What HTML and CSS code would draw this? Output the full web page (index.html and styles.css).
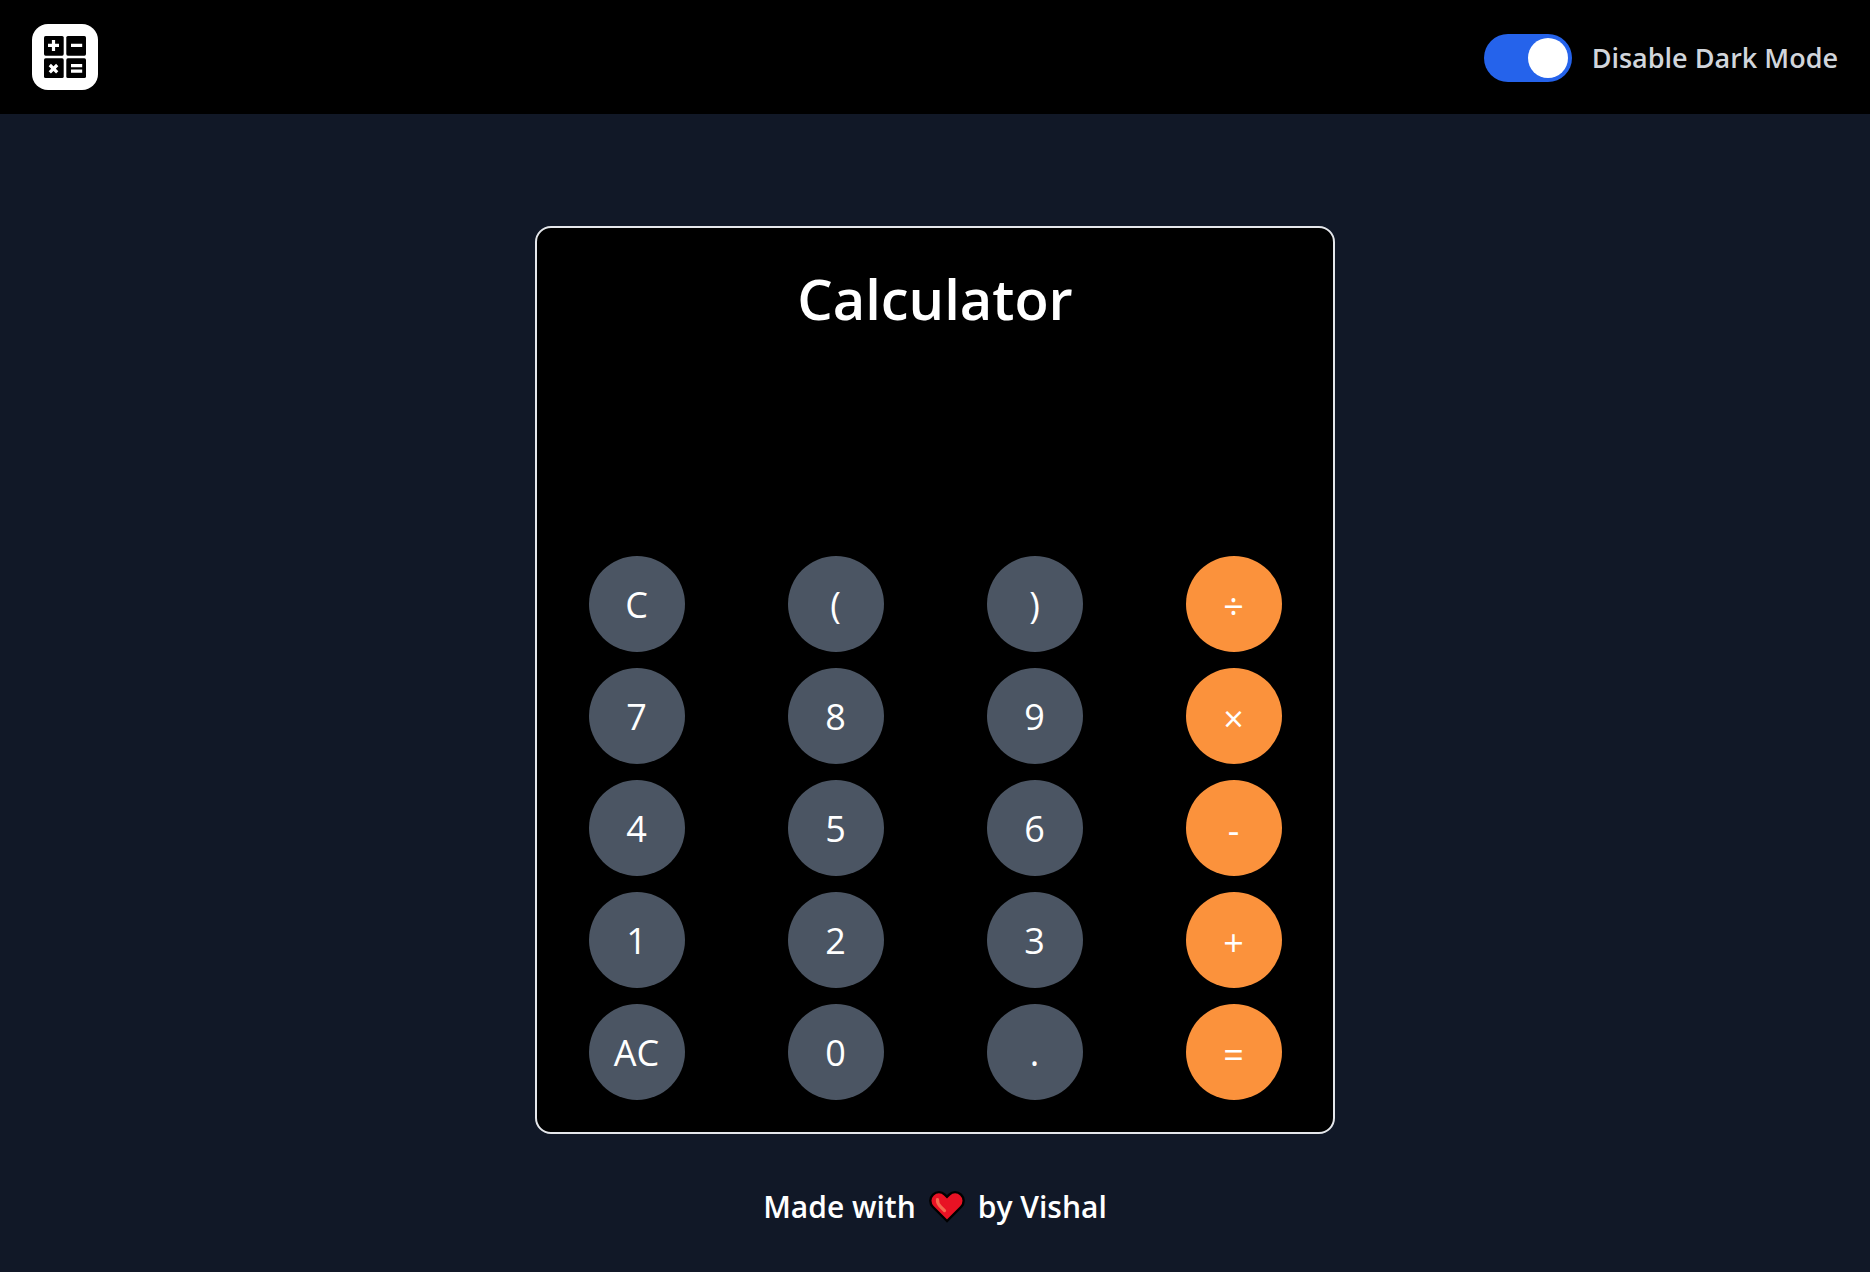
FILE: index.html
```html
<!DOCTYPE html>
<html lang="en">
<head>
<meta charset="utf-8">
<meta name="viewport" content="width=device-width, initial-scale=1">
<title>Calculator</title>
<link rel="stylesheet" href="styles.css">
</head>
<body>
<header class="navbar">
  <a class="logo" href="#" aria-label="Home">
    <svg viewBox="0 0 66 66" aria-hidden="true">
      <rect width="66" height="66" rx="16" fill="#fff"/>
      <g fill="#000">
        <rect x="12" y="12" width="19.7" height="19.7" rx="1.6"/>
        <rect x="34.3" y="12" width="19.7" height="19.7" rx="1.6"/>
        <rect x="12" y="34.3" width="19.7" height="19.7" rx="1.6"/>
        <rect x="34.3" y="34.3" width="19.7" height="19.7" rx="1.6"/>
      </g>
      <path d="M16 21.4h11M21.5 16v11M39 21.4h11.200M17.800 41l7.400 7.400M25.200 41l-7.400 7.400M39 41.700h11.200M39 47.200h11.200" fill="none" stroke="#fff" stroke-width="3.200"/>
    </svg>
  </a>
  <label class="theme">
    <input class="theme-switch" type="checkbox" role="switch" checked>
    <span>Disable Dark Mode</span>
  </label>
</header>
<main class="page">
  <section class="calculator">
    <h1 class="title">Calculator</h1>
    <output class="display" aria-label="Result"></output>
    <div class="keys">
      <button class="key">C</button>
      <button class="key">(</button>
      <button class="key">)</button>
      <button class="key operator">÷</button>
      <button class="key">7</button>
      <button class="key">8</button>
      <button class="key">9</button>
      <button class="key operator">×</button>
      <button class="key">4</button>
      <button class="key">5</button>
      <button class="key">6</button>
      <button class="key operator">-</button>
      <button class="key">1</button>
      <button class="key">2</button>
      <button class="key">3</button>
      <button class="key operator">+</button>
      <button class="key">AC</button>
      <button class="key">0</button>
      <button class="key">.</button>
      <button class="key operator">=</button>
    </div>
  </section>
</main>
<footer class="footer">
  <span>Made with</span>
  <svg class="heart" viewBox="0 0 36 34" role="img" aria-label="love">
    <path d="M18 31L4 17C.4 13.400.4 8 4 4.600C7.500 1.300 12.400 1.300 15.800 4.600L18 6.800L20.200 4.600C23.600 1.300 28.500 1.300 32 4.600C35.600 8 35.600 13.400 32 17Z" fill="#e81224" stroke="#000" stroke-width="2.400"/>
    <path d="M8.500 9.500c-.3 3.500 1 5.200 3 7.100l4 4" fill="none" stroke="#f4694f" stroke-width="3.200" stroke-linecap="round"/>
  </svg>
  <span>by Vishal</span>
</footer>
</body>
</html>
```
FILE: styles.css
```css
* {
  box-sizing: border-box;
}

body {
  margin: 0;
  min-height: 100vh;
  background: #111827;
  color: #fff;
  font-family: "Open Sans", "Noto Sans", sans-serif;
}

.navbar {
  display: flex;
  align-items: center;
  justify-content: space-between;
  padding: 24px 32px;
  background: #000;
}

.logo,
.logo svg {
  display: block;
  width: 66px;
  height: 66px;
}

.theme {
  display: flex;
  align-items: center;
  gap: 20px;
  padding-top: 2px;
  color: #d1d5db;
  font-size: 27px;
  font-weight: 600;
  line-height: 36px;
  cursor: pointer;
}

.theme-switch {
  appearance: none;
  display: flex;
  width: 88px;
  height: 48px;
  margin: 0;
  padding: 4px;
  border-radius: 24px;
  background: #4b5563;
  cursor: pointer;
}

.theme-switch::before {
  content: "";
  width: 40px;
  height: 40px;
  border-radius: 50%;
  background: #fff;
}

.theme-switch:checked {
  justify-content: flex-end;
  background: #2563eb;
}

.page {
  display: flex;
  justify-content: center;
  padding-top: 112px;
}

.calculator {
  width: 100%;
  max-width: 800px;
  padding: 32px 0;
  border: 2px solid #e5e7eb;
  border-radius: 16px;
  background: #000;
}

.title {
  margin: 0;
  font-size: 56px;
  font-weight: 600;
  line-height: 76px;
  text-align: center;
}

.display {
  display: block;
  min-height: 220px;
  padding: 32px 48px;
  font-size: 56px;
  text-align: right;
}

.keys {
  display: grid;
  grid-template-columns: repeat(4, 1fr);
  justify-items: center;
  row-gap: 16px;
}

.key {
  width: 96px;
  height: 96px;
  padding: 0;
  border: 0;
  border-radius: 50%;
  background: #4b5563;
  color: #fff;
  font-family: inherit;
  font-size: 36px;
  cursor: pointer;
}

.operator {
  padding-top: 4px;
  background: #fb923c;
}

.footer {
  display: flex;
  align-items: center;
  justify-content: center;
  gap: 13px;
  padding: 51px 0 32px;
  font-size: 30px;
  font-weight: 600;
  line-height: 44px;
}

.heart {
  width: 36px;
  height: 34px;
}
```
